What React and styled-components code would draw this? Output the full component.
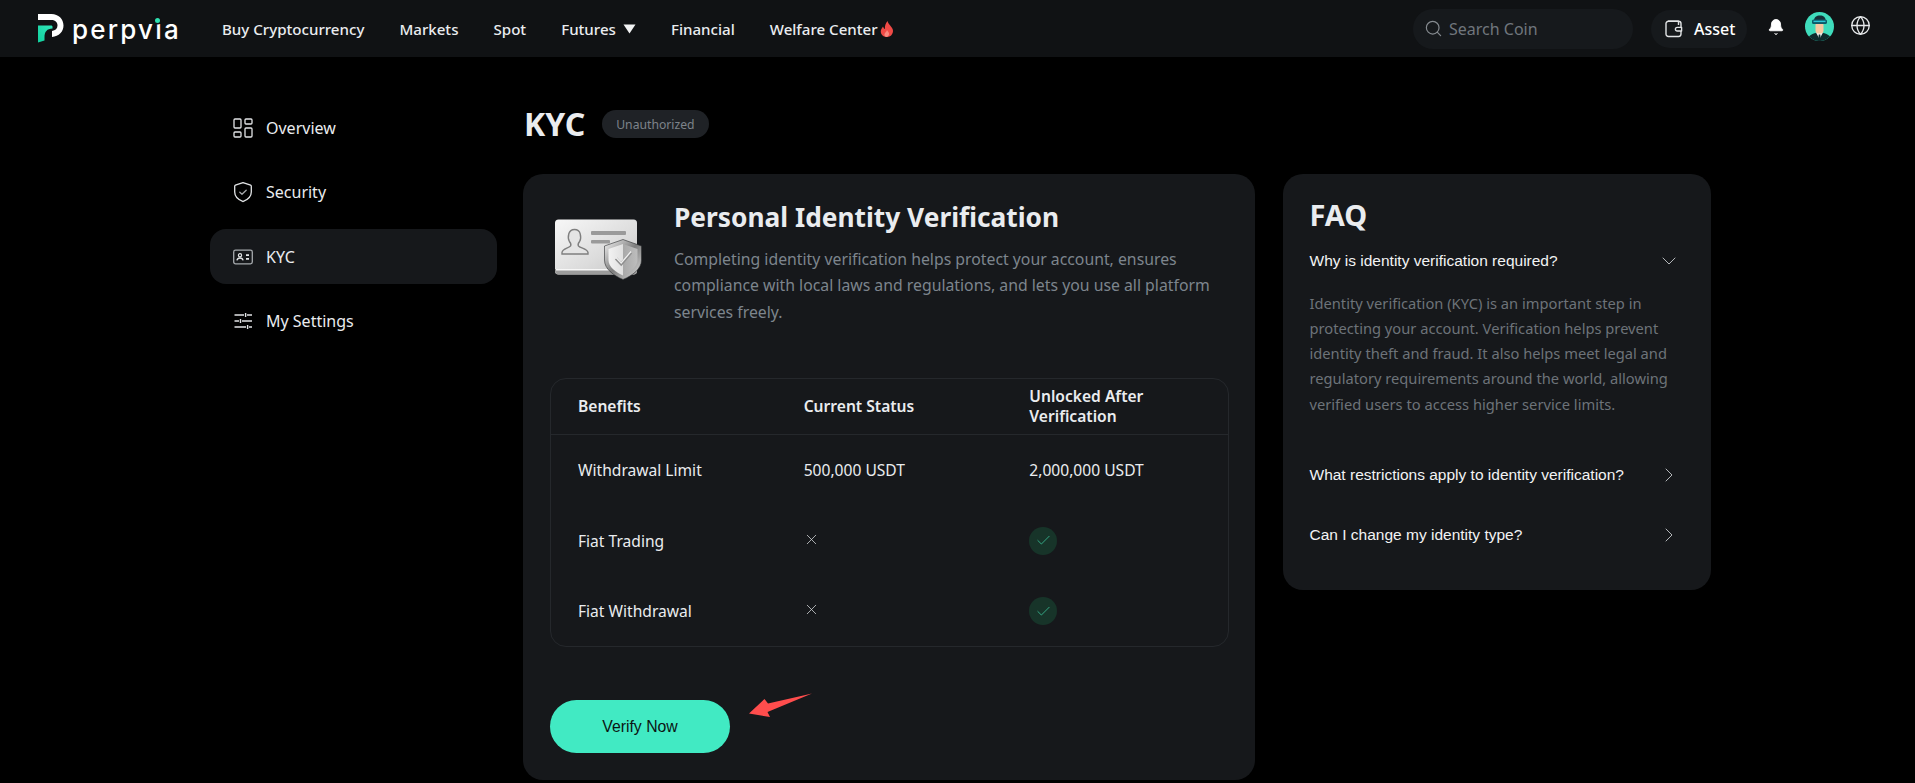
import React from "react";
import styled, { createGlobalStyle } from "styled-components";
import { ChevronDown, ChevronRight, Check, X, LayoutDashboard, Search, Globe, Bell } from "lucide-react";

const Global = createGlobalStyle`
  html, body { margin: 0; padding: 0; background: #000; height: 783px; overflow: hidden; }
  body { font-family: "Noto Sans", "Open Sans", sans-serif; color: #eaecef; }
  * { box-sizing: border-box; }
`;

const Header = styled.header`
  height: 57px; background: #101214; display: flex; align-items: center;
  padding: 0 44px 0 38px;
`;
const Logo = styled.div`display: flex; align-items: center; gap: 8px; width: 184px;`;
const Wordmark = styled.span`
  position: relative; font-family: Inter, sans-serif; font-size: 26px; font-weight: 500;
  letter-spacing: 2.2px; color: #fff; line-height: 1; margin-top: 2px;
`;
const IDot = styled.span`
  position: absolute; right: 21px; top: 1px; width: 5px; height: 5px; border-radius: 50%;
  background: #2ee0b0; box-shadow: 0 0 0 1.5px #101214;
`;
const Nav = styled.nav`display: flex; align-items: center; gap: 35px; flex: 1;`;
const NavItem = styled.a`
  display: flex; align-items: center; gap: ${(p) => p.$gap || 0}px; font-size: 15.1px; font-weight: 500;
  color: #eaecef; white-space: nowrap;
`;
const HeaderRight = styled.div`display: flex; align-items: center;`;
const SearchBox = styled.div`
  width: 220px; height: 40px; border-radius: 20px; background: #16191c; display: flex;
  align-items: center; gap: 6px; padding-left: 11px; color: #70767c; font-size: 16px;
  margin-right: 18px;
`;
const AssetPill = styled.div`
  width: 96px; height: 38px; border-radius: 19px; background: #16191c; display: flex;
  align-items: center; gap: 11px; padding-left: 14px; color: #fff; font-size: 16px; font-weight: 500;
  margin-right: 20px;
`;
const BellWrap = styled.div`display: flex; margin-right: 20px; margin-top: -3px;`;
const AvatarWrap = styled.div`display: flex; margin-right: 16px; margin-top: -4px;`;
const GlobeWrap = styled.div`display: flex; color: #e6e8ea; margin-top: -6px;`;

const Page = styled.div`display: flex; align-items: flex-start; padding: 43px 0 0 210px; gap: 26px;`;
const Sidebar = styled.aside`width: 287px; display: flex; flex-direction: column; gap: 9.5px;`;
const SideItem = styled.div`
  height: 55px; border-radius: 16px; display: flex; align-items: center; gap: 11px;
  padding-left: 21px; font-size: 16px; color: #eaecef;
  background: ${(p) => (p.$active ? "#16181b" : "transparent")};
`;
const Content = styled.main`width: 1188px;`;
const TitleRow = styled.div`display: flex; align-items: center; gap: 17px; height: 48px; margin-bottom: 26px; padding-left: 1px;`;
const Title = styled.h1`margin: 0; font-size: 32px; font-weight: 700; color: #eaecef; line-height: 1;`;
const Badge = styled.span`
  height: 28px; padding: 0 14px; border-radius: 14px; background: #1f2226; color: #7d838a;
  font-size: 12.2px; display: flex; align-items: center;
`;
const Columns = styled.div`display: flex; align-items: flex-start; gap: 28px;`;
const Card = styled.section`
  width: 732px; background: #16181b; border-radius: 20px; padding: 25px 26px 27px 27px; position: relative;
`;
const Intro = styled.div`display: flex; padding-left: 4px; gap: 31px;`;
const IdArt = styled.div`display: flex; flex: none; margin-top: 20px; width: 89px;`;
const IntroTitle = styled.h2`margin: 0; font-size: 26.3px; font-weight: 700; line-height: 36px; color: #eaecef;`;
const IntroText = styled.p`margin: 11px 0 0; font-size: 15.8px; line-height: 26.3px; color: #7d858d;`;
const TableBox = styled.div`margin-top: 53px; border: 1px solid #25282c; border-radius: 16px;`;
const Row = styled.div`
  display: grid; grid-template-columns: repeat(3, 1fr); align-items: center; height: 70.5px;
`;
const HeadRow = styled(Row)`height: 56px; border-bottom: 1px solid #25282c;`;
const HeadCell = styled.div`padding: 0 27px; font-size: 15.6px; font-weight: 600; line-height: 20.5px; color: #eaecef;`;
const Cell = styled.div`padding: 0 27px; font-size: 15.6px; color: #eaecef; display: flex; align-items: center;`;
const Cross = styled.span`display: flex; color: #d5d7da; margin: -3px 0 0 -1px;`;
const CheckBadge = styled.span`
  width: 28px; height: 28px; border-radius: 50%; background: #173429; color: #37b18b;
  display: flex; align-items: center; justify-content: center;
`;
const VerifyButton = styled.button`
  display: block; margin-top: 53px; width: 180px; height: 53px; border: 0; border-radius: 27px;
  background: #41eac3; color: #0c1513; font-family: "Liberation Sans", Arial, sans-serif; font-size: 15.8px;
`;
const Arrow = styled.svg`position: absolute; left: 225px; top: 519px;`;
const Faq = styled.section`
  width: 428px; background: #16181b; border-radius: 20px; padding: 23px 30px 39px 26.5px;
`;
const FaqTitle = styled.h2`margin: 0 0 12px; font-size: 29px; font-weight: 700; line-height: 36px; color: #eaecef;`;
const Question = styled.div`
  height: 32px; display: flex; align-items: center; justify-content: space-between;
  font-family: "Liberation Sans", Arial, sans-serif; font-size: 15.5px; color: #f2f3f4;
  margin-top: ${(p) => p.$gap || 0}px;
`;
const ChevronBox = styled.span`display: flex; color: #b4b7ba;`;
const Answer = styled.p`margin: 13.5px 0 0; font-size: 14.7px; line-height: 25.3px; color: #6d7379;`;

const LogoMark = () => (
  <svg width="26" height="29" viewBox="0 0 26 29">
    <defs>
      <linearGradient id="lg" x1="0" y1="1" x2="1" y2="0">
        <stop offset="0" stopColor="#0fcf9c" />
        <stop offset="1" stopColor="#33e6bb" />
      </linearGradient>
    </defs>
    <path d="M0 0H13.5C20.5 0 25.5 5 25.5 11.5C25.5 17.5 21 22.5 14 23V17C17.5 16.5 19.5 14.5 19.5 11.5C19.5 8.5 17.5 6 13.5 6H0Z" fill="#fff" />
    <path d="M0 11.5H13C14 11.5 14.5 12 14.5 13V14.5C9 14.5 6.5 18 6.5 23V26.5L0 28.5Z" fill="url(#lg)" />
  </svg>
);

const Wallet = () => (
  <svg width="18" height="18" viewBox="0 0 18 18" fill="none" stroke="#e2e4e6" strokeWidth="1.4" strokeLinejoin="round">
    <path d="M3 1.2H13.5V5" />
    <rect x="1" y="1.2" width="15" height="15.3" rx="2.4" />
    <path d="M16.6 7.4H12.2a1.7 1.7 0 0 0 0 3.6H16.6Z" fill="#16191c" />
  </svg>
);

const Flame = () => (
  <svg width="14" height="16" viewBox="0 0 14 16">
    <path d="M7.6 0C8 3 11 4.5 12.6 8C14 11.5 11.5 16 7 16C2.5 16 0 12.6 1 9C1.5 7.5 2.5 6.5 3 5.5C3.6 7 4.2 7.6 5 8C4.6 5 5.6 2 7.6 0Z" fill="#ef4a46" />
    <path d="M7 9C7.5 10.5 9.5 11.5 9 13.5C8.6 15 7.5 16 6.6 16C5 16 4 14.4 4.6 12.8C5 11.6 6.6 10.8 7 9Z" fill="#f9897f" />
  </svg>
);

const Caret = () => (
  <svg width="13" height="10" viewBox="0 0 13 10"><path d="M0.5 0.5H12.5L6.5 9.5Z" fill="#f2f3f4" /></svg>
);

const Avatar = () => (
  <svg width="29" height="29" viewBox="0 0 29 29">
    <defs><clipPath id="av"><circle cx="14.5" cy="14.5" r="14.5" /></clipPath></defs>
    <g clipPath="url(#av)">
      <rect width="29" height="29" fill="#3fdcbc" />
      <path d="M2 29C3 23.5 7 21 14.5 20.5C22 21 26 23.5 27 29Z" fill="#0e2a2c" />
      <path d="M11 20.5H18L14.5 27Z" fill="#f4f6f6" />
      <path d="M13.7 22.5H15.3L15.8 29H13.2Z" fill="#0e2a2c" />
      <rect x="10.5" y="10" width="8" height="11.5" rx="3" fill="#f7c8a2" />
      <path d="M9 9C9 5 11.5 3.5 15 3.5C18.5 3.5 20.5 5.5 20.5 8V9Z" fill="#143038" />
      <rect x="7" y="7.5" width="15" height="4.6" rx="1.6" fill="#0c5a68" />
      <rect x="8.5" y="8.7" width="12" height="1.4" fill="#2dc6d6" />
    </g>
  </svg>
);

const ShieldIcon = () => (
  <svg width="24" height="24" viewBox="0 0 24 24" fill="none" strokeLinecap="round" strokeLinejoin="round">
    <path d="M12 2.6L19.6 5.2C20 5.4 20.3 5.8 20.3 6.2V12C20.3 16.8 16.3 19.8 12.3 21.4C12.1 21.5 11.9 21.5 11.7 21.4C7.7 19.8 3.7 16.8 3.7 12V6.2C3.7 5.8 4 5.4 4.4 5.2Z" stroke="#e2e4e6" strokeWidth="1.3" />
    <path d="M8.8 12.2L11 14.2L15.2 10.2" stroke="#a4a7aa" strokeWidth="1.3" />
  </svg>
);

const IdCardIcon = () => (
  <svg width="24" height="24" viewBox="0 0 24 24" fill="none">
    <rect x="2.7" y="5.2" width="18.6" height="13.6" rx="1.8" stroke="#a5a9ad" strokeWidth="1.3" />
    <circle cx="9" cy="10.2" r="1.6" stroke="#e2e4e6" strokeWidth="1.2" />
    <path d="M5.9 15.4C6.3 13.6 7.5 13 9 13C10.5 13 11.7 13.6 12.1 15.4" stroke="#e2e4e6" strokeWidth="1.3" />
    <path d="M15 10.2H18M15 13.8H18" stroke="#e2e4e6" strokeWidth="1.7" />
  </svg>
);

const SlidersIcon = () => (
  <svg width="24" height="24" viewBox="0 0 24 24" fill="none" stroke="#e2e4e6" strokeWidth="1.4">
    <path d="M3.5 6H13M16 6H21M14.6 4V8" />
    <path d="M3.5 12H8M11 12H21M9.5 10V14" />
    <path d="M3.5 18H15M18 18H21M16.6 16V20" />
  </svg>
);

const IdArtwork = () => (
  <svg width="89" height="62" viewBox="0 0 89 62">
    <defs>
      <linearGradient id="cardFill" x1="0" y1="0" x2="1" y2="1">
        <stop offset="0" stopColor="#f7f7f7" />
        <stop offset="0.6" stopColor="#dcdcdc" />
        <stop offset="1" stopColor="#c4c4c4" />
      </linearGradient>
      <linearGradient id="shieldEdge" x1="0" y1="0" x2="1" y2="1">
        <stop offset="0" stopColor="#f6f6f6" />
        <stop offset="0.5" stopColor="#7d7d7d" />
        <stop offset="1" stopColor="#e2e2e2" />
      </linearGradient>
      <linearGradient id="shieldFill" x1="0" y1="0" x2="1" y2="0">
        <stop offset="0" stopColor="#f2f2f2" />
        <stop offset="0.5" stopColor="#e0e0e0" />
        <stop offset="0.51" stopColor="#a9a9a9" />
        <stop offset="1" stopColor="#bdbdbd" />
      </linearGradient>
    </defs>
    <rect x="1" y="0.5" width="82" height="55" rx="3.5" fill="url(#cardFill)" />
    <path d="M1 50H83V52C83 54 81.5 55.5 79.5 55.5H4.5C2.5 55.5 1 54 1 52Z" fill="#9c9c9c" />
    <path d="M2 50H82V51.5H2Z" fill="#f7f7f7" />
    <path d="M8 33.5C8.6 29.5 14 29.5 16.5 27C17.3 26 16.6 24 15.4 22.5C14.4 20.8 14.2 17 14.8 14.8C15.6 12 18 10.5 20.5 10.5C23.2 10.5 25.5 12 26.2 14.8C26.8 17 26.6 20.8 25.6 22.5C24.4 24 23.7 26 24.5 27C27 29.5 33 29.5 34 33.5V35H8Z" fill="#e4e4e4" stroke="#7f7f7f" strokeWidth="1.4" />
    <rect x="37" y="12" width="35" height="4" rx="1" fill="#9a9a9a" />
    <rect x="37" y="21" width="19" height="3.6" rx="1" fill="#9a9a9a" />
    <path d="M69 20.5L87.5 27V41C87.5 50 78.5 56.5 69 60.5C59.5 56.5 50.5 50 50.5 41V27Z" fill="url(#shieldEdge)" stroke="#2a2b2d" strokeWidth="0.6" />
    <path d="M69 25L83.5 30V41C83.5 48 76 53.5 69 56.5C62 53.5 54.5 48 54.5 41V30Z" fill="url(#shieldFill)" />
    <path d="M62 39.5L67.2 45L77 33.5" fill="none" stroke="#8f8f8f" strokeWidth="3" />
    <path d="M62 38.5L67.2 44L77 32.5" fill="none" stroke="#efefef" strokeWidth="1.4" />
  </svg>
);

const rows = [
  ["Withdrawal Limit", "500,000 USDT", "2,000,000 USDT"],
  ["Fiat Trading", null, null],
  ["Fiat Withdrawal", null, null],
];

export default function App() {
  return (
    <>
      <Global />
      <Header>
        <Logo>
          <LogoMark />
          <Wordmark>perpvia<IDot /></Wordmark>
        </Logo>
        <Nav>
          <NavItem>Buy Cryptocurrency</NavItem>
          <NavItem>Markets</NavItem>
          <NavItem>Spot</NavItem>
          <NavItem $gap={7}>Futures <Caret /></NavItem>
          <NavItem>Financial</NavItem>
          <NavItem $gap={2}>Welfare Center <Flame /></NavItem>
        </Nav>
        <HeaderRight>
          <SearchBox><Search size={19} strokeWidth={1.5} color="#868b90" />Search Coin</SearchBox>
          <AssetPill><Wallet />Asset</AssetPill>
          <BellWrap><Bell size={18} fill="#fff" color="#fff" strokeWidth={1.2} /></BellWrap>
          <AvatarWrap><Avatar /></AvatarWrap>
          <GlobeWrap><Globe size={21} strokeWidth={1.5} /></GlobeWrap>
        </HeaderRight>
      </Header>
      <Page>
        <Sidebar>
          <SideItem><LayoutDashboard size={24} color="#e2e4e6" strokeWidth={1.3} />Overview</SideItem>
          <SideItem><ShieldIcon />Security</SideItem>
          <SideItem $active><IdCardIcon />KYC</SideItem>
          <SideItem><SlidersIcon />My Settings</SideItem>
        </Sidebar>
        <Content>
          <TitleRow>
            <Title>KYC</Title>
            <Badge>Unauthorized</Badge>
          </TitleRow>
          <Columns>
            <Card>
              <Intro>
                <IdArt><IdArtwork /></IdArt>
                <div>
                  <IntroTitle>Personal Identity Verification</IntroTitle>
                  <IntroText>
                    Completing identity verification helps protect your account, ensures compliance with local laws and regulations, and lets you use all platform services freely.
                  </IntroText>
                </div>
              </Intro>
              <TableBox>
                <HeadRow>
                  <HeadCell>Benefits</HeadCell>
                  <HeadCell>Current Status</HeadCell>
                  <HeadCell>Unlocked After Verification</HeadCell>
                </HeadRow>
                {rows.map((r) => (
                  <Row key={r[0]}>
                    <Cell>{r[0]}</Cell>
                    <Cell>{r[1] || <Cross><X size={17} strokeWidth={1.1} /></Cross>}</Cell>
                    <Cell>{r[2] || <CheckBadge><Check size={17} strokeWidth={1.3} /></CheckBadge>}</Cell>
                  </Row>
                ))}
              </TableBox>
              <VerifyButton>Verify Now</VerifyButton>
              <Arrow width="66" height="26" viewBox="0 0 66 26">
                <path d="M64 0.5L20 10.5L16.5 6L1 20.5L22 24L19.5 19Z" fill="#ff4d4d" />
              </Arrow>
            </Card>
            <Faq>
              <FaqTitle>FAQ</FaqTitle>
              <Question>
                Why is identity verification required?
                <ChevronBox><ChevronDown size={24} strokeWidth={1} /></ChevronBox>
              </Question>
              <Answer>
                Identity verification (KYC) is an important step in protecting your account. Verification helps prevent identity theft and fraud. It also helps meet legal and regulatory requirements around the world, allowing verified users to access higher service limits.
              </Answer>
              <Question $gap={42}>
                What restrictions apply to identity verification?
                <ChevronBox><ChevronRight size={24} strokeWidth={1} /></ChevronBox>
              </Question>
              <Question $gap={28}>
                Can I change my identity type?
                <ChevronBox><ChevronRight size={24} strokeWidth={1} /></ChevronBox>
              </Question>
            </Faq>
          </Columns>
        </Content>
      </Page>
    </>
  );
}
